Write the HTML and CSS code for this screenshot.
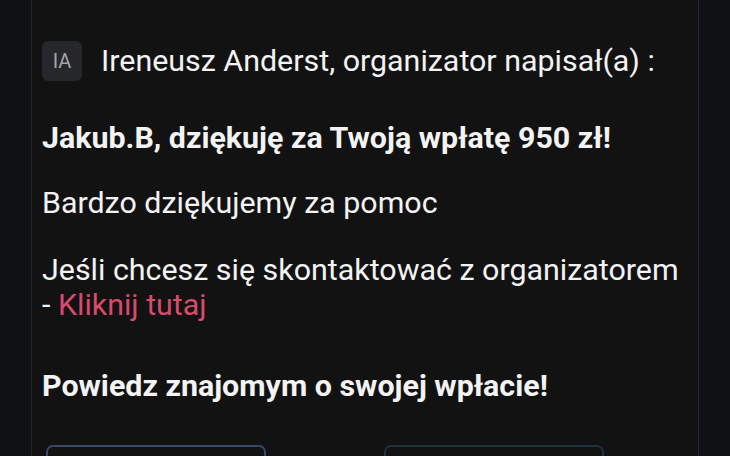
FILE: index.html
```html
<!DOCTYPE html>
<html lang="pl">
<head>
<meta charset="utf-8">
<link rel="stylesheet" href="styles.css">
</head>
<body>
<div class="page">
  <div class="side"></div>
  <main class="card">
    <div class="author">
      <div class="avatar">IA</div>
      <div class="author-text">Ireneusz Anderst, organizator napisał(a) :</div>
    </div>
    <p class="bold thanks">Jakub.B, dziękuję za Twoją wpłatę 950 zł!</p>
    <p class="plain help">Bardzo dziękujemy za pomoc</p>
    <p class="plain contact">Jeśli chcesz się skontaktować z organizatorem<br>- <a class="link" href="#">Kliknij tutaj</a></p>
    <p class="bold share">Powiedz znajomym o swojej wpłacie!</p>
    <div class="buttons">
      <div class="btn btn-blue"></div>
      <div class="btn btn-teal"></div>
    </div>
  </main>
  <div class="side"></div>
</div>
</body>
</html>
```
FILE: styles.css
```css
html, body {
  margin: 0;
  padding: 0;
  height: 100%;
  background: #0f1014;
  overflow: hidden;
}
.page {
  display: flex;
  height: 456px;
  overflow: hidden;
  font-family: Roboto, "Liberation Sans", sans-serif;
  color: #f3f3f3;
}
.side {
  width: 31px;
  flex: none;
  background: #101115;
}
.card {
  flex: 1;
  background: #121212;
  border-left: 1px solid #26272b;
  border-right: 1px solid #26272b;
  padding: 41px 0 0 10px;
  box-sizing: border-box;
}
.author {
  display: flex;
  align-items: center;
  gap: 19px;
}
.avatar {
  width: 40px;
  height: 40px;
  flex: none;
  border-radius: 6px;
  background: #26272b;
  color: #a3a4a8;
  font-size: 20px;
  display: flex;
  align-items: center;
  justify-content: center;
}
.author-text {
  font-size: 30.4px;
  line-height: 40px;
  white-space: nowrap;
}
p {
  margin: 0;
  white-space: nowrap;
}
.bold {
  font-weight: 700;
  font-size: 30.4px;
  line-height: 35px;
}
.plain {
  font-size: 30.4px;
  line-height: 35px;
}
.thanks { margin-top: 39px; }
.help { margin-top: 30px; }
.contact { margin-top: 32px; }
.link {
  color: #d94a6b;
  text-decoration: none;
}
.share { margin-top: 46px; }
.buttons {
  display: flex;
  gap: 118px;
  margin-top: 42px;
  padding-left: 4px;
}
.btn {
  width: 220px;
  height: 60px;
  flex: none;
  border-radius: 7px;
  box-sizing: border-box;
}
.btn-blue { border: 2px solid #384668; }
.btn-teal { border: 2px solid #1e323d; }
```
